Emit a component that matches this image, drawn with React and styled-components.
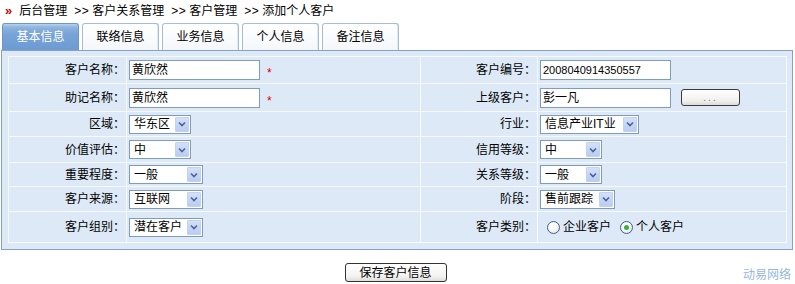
import React from 'react';
import styled, { createGlobalStyle } from 'styled-components';

const Global = createGlobalStyle`
  html, body { margin: 0; padding: 0; background: #fff; }
  body {
    font-family: "Liberation Sans", "Noto Sans CJK SC", sans-serif;
    font-size: 12px;
    color: #000;
    line-height: 16px;
  }
  * { box-sizing: border-box; }
`;

const Page = styled.div`
  width: 795px;
`;

const Crumbs = styled.div`
  height: 20px;
  display: flex;
  align-items: center;
  padding-left: 5px;
  padding-top: 1px;
`;

const CrumbMark = styled.span`
  color: #d00000;
  font-weight: bold;
  font-size: 13px;
  margin-right: 7px;
  font-family: "Liberation Sans", sans-serif;
`;

const CrumbSep = styled.span`
  margin: 0 3px 0 7px;
  letter-spacing: 0.5px;
`;

const Tabs = styled.div`
  display: flex;
  gap: 3px;
  margin-top: 3px;
  padding-left: 2px;
  height: 27px;
`;

const Tab = styled.div`
  width: 77px;
  height: 27px;
  display: flex;
  align-items: center;
  justify-content: center;
  font-size: 12px;
  border: 1px solid ${p => (p.$active ? '#6f97c6' : '#a9bcd2')};
  border-bottom: none;
  border-radius: 3px 3px 0 0;
  color: ${p => (p.$active ? '#fff' : '#000')};
  background: ${p =>
    p.$active
      ? 'linear-gradient(#b9d3ef 0%, #8fb5e0 12%, #77a3d7 40%, #6d9bd2 100%)'
      : 'linear-gradient(#ffffff, #f4f7fa)'};
  box-shadow: ${p => (p.$active ? 'none' : 'inset -1px 0 0 #e3e9f1')};
`;

const Panel = styled.div`
  margin-left: 1px;
  width: 792px;
  border: 1px solid #86a2c0;
  background: #dde9f6;
  padding: 5px 5px 6px 6px;
`;

const Grid = styled.table`
  width: 778px;
  border-collapse: collapse;
  table-layout: fixed;
`;

const Row = styled.tr`
  height: ${p => p.$h}px;
`;

const Label = styled.td`
  border: 1px solid #f7fafd;
  text-align: right;
  padding: 0 1px 0 0;
  white-space: nowrap;
`;

const Field = styled.td`
  border: 1px solid #f7fafd;
  padding: 0 0 0 2px;
  white-space: nowrap;
`;

const Line = styled.div`
  display: flex;
  align-items: center;
`;

const TextBox = styled.div`
  width: ${p => p.$w || 131}px;
  height: 20px;
  border: 1px solid #7f9db9;
  background: #fff;
  padding: 0 2px;
  display: flex;
  align-items: center;
  font-size: ${p => (p.$num ? '11px' : '12px')};
`;

const Required = styled.span`
  color: #e00000;
  margin-left: 7px;
  font-size: 12px;
  position: relative;
  top: 3px;
`;

const SelectBox = styled.div`
  width: ${p => p.$w}px;
  height: 19px;
  border: 1px solid #7f9db9;
  background: #fff;
  display: flex;
  align-items: center;
  justify-content: space-between;
  padding: 0 1px 0 4px;
`;

const ArrowBox = styled.span`
  width: 14px;
  height: 15px;
  background: linear-gradient(#d3e0f8, #b9ccf1);
  border: 1px solid #c2d2f0;
  border-radius: 1px;
  display: flex;
  align-items: center;
  justify-content: center;
`;

const DotsButton = styled.div`
  width: 59px;
  height: 17px;
  margin-left: 10px;
  border: 1px solid #3c3c3c;
  border-radius: 3px;
  background: linear-gradient(#ffffff, #f0f0ee 70%, #dcdcd8);
  color: #777;
  font-size: 10px;
  letter-spacing: 2px;
  display: flex;
  align-items: center;
  justify-content: center;
  line-height: 10px;
`;

const RadioGroup = styled.div`
  display: flex;
  align-items: center;
  padding-left: 7px;
`;

const RadioItem = styled.label`
  display: flex;
  align-items: center;
  margin-right: 9px;
`;

const RadioCircle = styled.span`
  width: 13px;
  height: 13px;
  border-radius: 50%;
  border: 1px solid #3d5f8c;
  background: radial-gradient(circle at 40% 35%, #ffffff 30%, #dcdcd6 100%);
  display: flex;
  align-items: center;
  justify-content: center;
  margin-right: 3px;
  &::after {
    content: '';
    width: 5px;
    height: 5px;
    border-radius: 50%;
    background: ${p => (p.$checked ? '#3fae3c' : 'transparent')};
  }
`;

const Footer = styled.div`
  display: grid;
  grid-template-columns: 1fr auto 1fr;
  align-items: end;
  margin-top: 13px;
  padding-right: 4px;
`;

const SaveButton = styled.div`
  grid-column: 2;
  width: 102px;
  height: 19px;
  border: 1px solid #333;
  border-radius: 3px;
  background: linear-gradient(#ffffff, #f3f3f1 70%, #dededa);
  display: flex;
  align-items: center;
  justify-content: center;
  font-size: 12px;
`;

const Brand = styled.div`
  grid-column: 3;
  justify-self: end;
  color: #97b8dc;
  font-size: 12px;
  position: relative;
  top: 1px;
`;

const Chevron = () => (
  <svg width="8" height="6" viewBox="0 0 8 6">
    <path d="M1 1.5 L4 4.5 L7 1.5" fill="none" stroke="#4a6496" strokeWidth="1.6" />
  </svg>
);

const Select = ({ value, w }) => (
  <SelectBox $w={w}>
    <span>{value}</span>
    <ArrowBox>
      <Chevron />
    </ArrowBox>
  </SelectBox>
);

const Radio = ({ label, checked }) => (
  <RadioItem>
    <RadioCircle $checked={checked} />
    <span>{label}</span>
  </RadioItem>
);

const tabs = ['基本信息', '联络信息', '业务信息', '个人信息', '备注信息'];
const crumbs = ['后台管理', '客户关系管理', '客户管理', '添加个人客户'];

export default function App() {
  return (
    <Page>
      <Global />
      <Crumbs>
        <CrumbMark>»</CrumbMark>
        {crumbs.map((c, i) => (
          <React.Fragment key={c}>
            {i > 0 && <CrumbSep>&gt;&gt;</CrumbSep>}
            <span>{c}</span>
          </React.Fragment>
        ))}
      </Crumbs>
      <Tabs>
        {tabs.map((t, i) => (
          <Tab key={t} $active={i === 0}>
            {t}
          </Tab>
        ))}
      </Tabs>
      <Panel>
        <Grid>
          <colgroup>
            <col style={{ width: 118 }} />
            <col style={{ width: 294 }} />
            <col style={{ width: 117 }} />
            <col style={{ width: 249 }} />
          </colgroup>
          <tbody>
            <Row $h={27}>
              <Label>客户名称：</Label>
              <Field>
                <Line>
                  <TextBox>黄欣然</TextBox>
                  <Required>*</Required>
                </Line>
              </Field>
              <Label>客户编号：</Label>
              <Field>
                <TextBox $num>2008040914350557</TextBox>
              </Field>
            </Row>
            <Row $h={28}>
              <Label>助记名称：</Label>
              <Field>
                <Line>
                  <TextBox>黄欣然</TextBox>
                  <Required>*</Required>
                </Line>
              </Field>
              <Label>上级客户：</Label>
              <Field>
                <Line>
                  <TextBox>彭一凡</TextBox>
                  <DotsButton>...</DotsButton>
                </Line>
              </Field>
            </Row>
            <Row $h={25}>
              <Label>区域：</Label>
              <Field>
                <Select value="华东区" w={62} />
              </Field>
              <Label>行业：</Label>
              <Field>
                <Select value="信息产业IT业" w={99} />
              </Field>
            </Row>
            <Row $h={26}>
              <Label>价值评估：</Label>
              <Field>
                <Select value="中" w={62} />
              </Field>
              <Label>信用等级：</Label>
              <Field>
                <Select value="中" w={62} />
              </Field>
            </Row>
            <Row $h={24}>
              <Label>重要程度：</Label>
              <Field>
                <Select value="一般" w={74} />
              </Field>
              <Label>关系等级：</Label>
              <Field>
                <Select value="一般" w={62} />
              </Field>
            </Row>
            <Row $h={25}>
              <Label>客户来源：</Label>
              <Field>
                <Select value="互联网" w={74} />
              </Field>
              <Label>阶段：</Label>
              <Field>
                <Select value="售前跟踪" w={75} />
              </Field>
            </Row>
            <Row $h={31}>
              <Label>客户组别：</Label>
              <Field>
                <Select value="潜在客户" w={74} />
              </Field>
              <Label>客户类别：</Label>
              <Field>
                <RadioGroup>
                  <Radio label="企业客户" />
                  <Radio label="个人客户" checked />
                </RadioGroup>
              </Field>
            </Row>
          </tbody>
        </Grid>
      </Panel>
      <Footer>
        <SaveButton>保存客户信息</SaveButton>
        <Brand>动易网络</Brand>
      </Footer>
    </Page>
  );
}
